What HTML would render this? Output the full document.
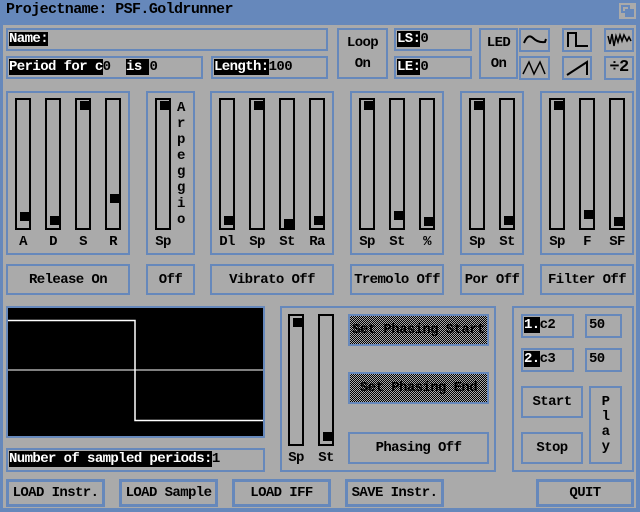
<!DOCTYPE html>
<html><head><style>
*{margin:0;padding:0;box-sizing:border-box}
body{width:640px;height:512px;background:#6688bb;position:relative;overflow:hidden;font-family:"Liberation Mono",monospace;font-weight:bold;font-size:14px;letter-spacing:-0.6px;color:#000}
.a{position:absolute}
.main{left:3px;top:25px;width:633px;height:483px;background:#aaa}
.b{position:absolute;border:2px solid #6688bb}
.bt{position:absolute;border:2px solid #6688bb;display:flex;align-items:center;justify-content:center;font-size:14px;line-height:14px;white-space:nowrap}
.bb{border-width:3px}
.tr{position:absolute;border:2px solid #000;width:16px;top:98px;height:132px}
.k{position:absolute;left:3px;width:9px;height:9px;background:#000}
.lb{position:absolute;top:234px;font-size:14px;width:30px;text-align:center}
.inv{background:#000;color:#fff}
.t{position:absolute;font-size:14px;line-height:14px;white-space:pre}
.dith{background:repeating-conic-gradient(#000 0 25%,#aaa 0 50%) 0 0/2px 2px}
</style></head><body>
<div class="t" style="left:6px;top:3px;font-size:15px;color:#000">Projectname: PSF.Goldrunner</div>
<div class="a" style="left:619px;top:3px;width:17px;height:16px;background:#aaa"></div>
<div class="a" style="left:621px;top:5px;width:9px;height:8px;border:2px solid #6688bb"></div>
<div class="a" style="left:625px;top:9px;width:9px;height:8px;background:#6688bb"></div>
<div class="a main"></div>

<div class="b" style="left:6px;top:28px;width:322px;height:23px"></div>
<div class="t inv" style="left:9px;top:32px">Name:</div>
<div class="b" style="left:6px;top:56px;width:197px;height:23px"></div>
<div class="t" style="left:9px;top:60px"><span class="inv">Period for c</span>0  <span class="inv">is </span>0</div>
<div class="b" style="left:211px;top:56px;width:117px;height:23px"></div>
<div class="t" style="left:214px;top:60px"><span class="inv">Length:</span>100</div>

<div class="bt" style="left:337px;top:28px;width:51px;height:51px;flex-direction:column;gap:7px"><span>Loop</span><span>On</span></div>
<div class="b" style="left:394px;top:28px;width:78px;height:23px"></div>
<div class="t" style="left:397px;top:32px"><span class="inv">LS:</span>0</div>
<div class="b" style="left:394px;top:56px;width:78px;height:23px"></div>
<div class="t" style="left:397px;top:60px"><span class="inv">LE:</span>0</div>
<div class="bt" style="left:479px;top:28px;width:39px;height:51px;flex-direction:column;gap:7px"><span>LED</span><span>On</span></div>

<div class="b" style="left:519px;top:28px;width:31px;height:24px"></div>
<svg class="a" style="left:519px;top:28px" width="31" height="24"><path d="M5 15 Q9 5 14 10 T26 14 L27 11" fill="none" stroke="#000" stroke-width="2"/></svg>
<div class="b" style="left:562px;top:28px;width:30px;height:24px"></div>
<svg class="a" style="left:562px;top:28px" width="30" height="24"><path d="M6 19 V5 H14 V18 H26" fill="none" stroke="#000" stroke-width="2"/></svg>
<div class="b" style="left:604px;top:28px;width:30px;height:24px"></div>
<svg class="a" style="left:604px;top:28px" width="30" height="24"><path d="M4 8 L6 16 L8 6 L10 18 L12 8 L14 14 L16 7 L18 13 L20 7 L23 13 L25 9 L27 13" fill="none" stroke="#000" stroke-width="1.5"/></svg>
<div class="b" style="left:519px;top:56px;width:31px;height:24px"></div>
<svg class="a" style="left:519px;top:56px" width="31" height="24"><path d="M4 18 L10 6 L15 18 L21 6 L26 18" fill="none" stroke="#000" stroke-width="1.5"/></svg>
<div class="b" style="left:562px;top:56px;width:30px;height:24px"></div>
<svg class="a" style="left:562px;top:56px" width="30" height="24"><path d="M5 19 L25 6 V19" fill="none" stroke="#000" stroke-width="2"/></svg>
<div class="bt" style="left:604px;top:56px;width:30px;height:24px;font-size:17px">÷2</div>

<div class="b" style="left:6px;top:91px;width:124px;height:164px"></div>
<div class="tr" style="left:15px"><div class="k" style="top:112px"></div></div>
<div class="tr" style="left:45px"><div class="k" style="top:116px"></div></div>
<div class="tr" style="left:75px"><div class="k" style="top:1px"></div></div>
<div class="tr" style="left:105px"><div class="k" style="top:94px"></div></div>
<div class="lb" style="left:8px">A</div><div class="lb" style="left:38px">D</div><div class="lb" style="left:68px">S</div><div class="lb" style="left:98px">R</div>
<div class="b" style="left:146px;top:91px;width:49px;height:164px"></div>
<div class="tr" style="left:155px"><div class="k" style="top:1px"></div></div>
<div class="lb" style="left:148px">Sp</div>
<div class="t" style="left:177px;top:100px;line-height:16px;font-size:14px">A<br>r<br>p<br>e<br>g<br>g<br>i<br>o</div>
<div class="b" style="left:210px;top:91px;width:124px;height:164px"></div>
<div class="tr" style="left:219px"><div class="k" style="top:116px"></div></div>
<div class="tr" style="left:249px"><div class="k" style="top:1px"></div></div>
<div class="tr" style="left:279px"><div class="k" style="top:119px"></div></div>
<div class="tr" style="left:309px"><div class="k" style="top:116px"></div></div>
<div class="lb" style="left:212px">Dl</div><div class="lb" style="left:242px">Sp</div><div class="lb" style="left:272px">St</div><div class="lb" style="left:302px">Ra</div>
<div class="b" style="left:350px;top:91px;width:94px;height:164px"></div>
<div class="tr" style="left:359px"><div class="k" style="top:1px"></div></div>
<div class="tr" style="left:389px"><div class="k" style="top:111px"></div></div>
<div class="tr" style="left:419px"><div class="k" style="top:117px"></div></div>
<div class="lb" style="left:352px">Sp</div><div class="lb" style="left:382px">St</div><div class="lb" style="left:412px">%</div>
<div class="b" style="left:460px;top:91px;width:64px;height:164px"></div>
<div class="tr" style="left:469px"><div class="k" style="top:1px"></div></div>
<div class="tr" style="left:499px"><div class="k" style="top:116px"></div></div>
<div class="lb" style="left:462px">Sp</div><div class="lb" style="left:492px">St</div>
<div class="b" style="left:540px;top:91px;width:94px;height:164px"></div>
<div class="tr" style="left:549px"><div class="k" style="top:1px"></div></div>
<div class="tr" style="left:579px"><div class="k" style="top:110px"></div></div>
<div class="tr" style="left:609px"><div class="k" style="top:117px"></div></div>
<div class="lb" style="left:542px">Sp</div><div class="lb" style="left:572px">F</div><div class="lb" style="left:602px">SF</div>

<div class="bt" style="left:6px;top:264px;width:124px;height:31px">Release On</div>
<div class="bt" style="left:146px;top:264px;width:49px;height:31px">Off</div>
<div class="bt" style="left:210px;top:264px;width:124px;height:31px">Vibrato Off</div>
<div class="bt" style="left:350px;top:264px;width:94px;height:31px">Tremolo Off</div>
<div class="bt" style="left:460px;top:264px;width:64px;height:31px">Por Off</div>
<div class="bt" style="left:540px;top:264px;width:94px;height:31px">Filter Off</div>

<div class="b" style="left:6px;top:306px;width:259px;height:132px;background:#000"></div>
<svg class="a" style="left:8px;top:308px" width="255" height="128"><path d="M0 62H255" stroke="#aaa" stroke-width="1.5"/><path d="M0 12.5H127V112.5H255" fill="none" stroke="#fff" stroke-width="1.5"/></svg>
<div class="b" style="left:6px;top:448px;width:259px;height:24px"></div>
<div class="t" style="left:9px;top:452px"><span class="inv">Number of sampled periods:</span>1</div>

<div class="b" style="left:280px;top:306px;width:216px;height:166px"></div>
<div class="tr" style="left:288px;top:314px;height:132px"><div class="k" style="top:2px"></div></div>
<div class="tr" style="left:318px;top:314px;height:132px"><div class="k" style="top:116px"></div></div>
<div class="lb" style="left:281px;top:450px">Sp</div><div class="lb" style="left:311px;top:450px">St</div>
<div class="bt dith" style="left:348px;top:314px;width:141px;height:32px">Set Phasing Start</div>
<div class="bt dith" style="left:348px;top:372px;width:141px;height:32px">Set Phasing End</div>
<div class="bt" style="left:348px;top:432px;width:141px;height:32px">Phasing Off</div>

<div class="b" style="left:512px;top:306px;width:122px;height:166px"></div>
<div class="b" style="left:521px;top:314px;width:53px;height:24px"></div>
<div class="t" style="left:524px;top:318px"><span class="inv">1.</span>c2</div>
<div class="b" style="left:585px;top:314px;width:37px;height:24px"></div>
<div class="t" style="left:589px;top:318px">50</div>
<div class="b" style="left:521px;top:348px;width:53px;height:24px"></div>
<div class="t" style="left:524px;top:352px"><span class="inv">2.</span>c3</div>
<div class="b" style="left:585px;top:348px;width:37px;height:24px"></div>
<div class="t" style="left:589px;top:352px">50</div>
<div class="bt" style="left:521px;top:386px;width:62px;height:32px">Start</div>
<div class="bt" style="left:521px;top:432px;width:62px;height:32px">Stop</div>
<div class="bt" style="left:589px;top:386px;width:33px;height:78px;line-height:15px;text-align:center;white-space:normal">P<br>l<br>a<br>y</div>

<div class="bt bb" style="left:6px;top:479px;width:99px;height:28px">LOAD Instr.</div>
<div class="bt bb" style="left:119px;top:479px;width:99px;height:28px">LOAD Sample</div>
<div class="bt bb" style="left:232px;top:479px;width:99px;height:28px">LOAD IFF</div>
<div class="bt bb" style="left:345px;top:479px;width:99px;height:28px">SAVE Instr.</div>
<div class="bt bb" style="left:536px;top:479px;width:98px;height:28px">QUIT</div>
</body></html>
